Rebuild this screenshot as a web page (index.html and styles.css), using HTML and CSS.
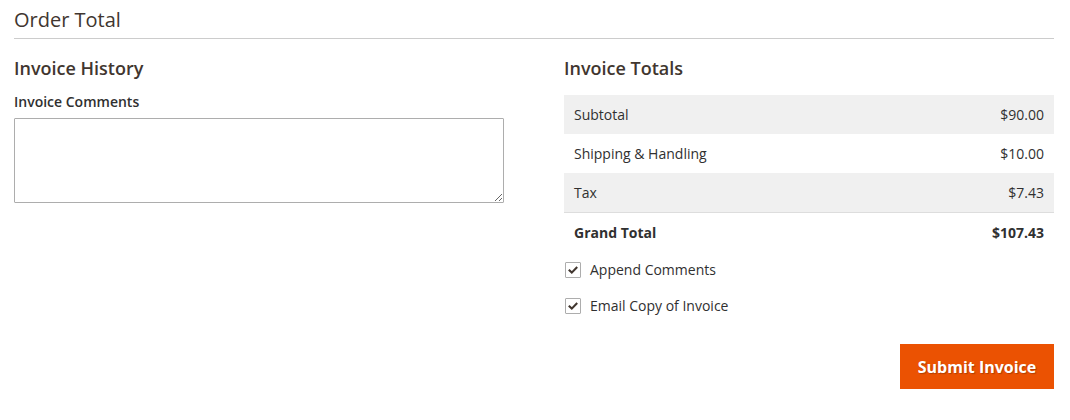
FILE: index.html
```html
<!DOCTYPE html>
<html>
<head>
<meta charset="utf-8">
<link rel="stylesheet" href="styles.css">
</head>
<body>
<section class="page">
  <h2 class="section-title">Order Total</h2>
  <div class="columns">
    <div class="col">
      <h3 class="item-title">Invoice History</h3>
      <label class="field-label" for="c">Invoice Comments</label>
      <textarea id="c" class="comments"></textarea>
    </div>
    <div class="col">
      <h3 class="item-title">Invoice Totals</h3>
      <table class="totals">
        <tr class="shade"><td>Subtotal</td><td class="amt">$90.00</td></tr>
        <tr><td>Shipping &amp; Handling</td><td class="amt">$10.00</td></tr>
        <tr class="shade"><td>Tax</td><td class="amt">$7.43</td></tr>
        <tr class="grand"><td>Grand Total</td><td class="amt">$107.43</td></tr>
      </table>
      <div class="checks">
        <label class="check"><span class="box"><svg viewBox="0 0 16 16" width="16" height="16"><path d="M3.2 7.8 L6.6 11 L12.8 4.6" fill="none" stroke="#41362f" stroke-width="2.4"/></svg></span>Append Comments</label>
        <label class="check"><span class="box"><svg viewBox="0 0 16 16" width="16" height="16"><path d="M3.2 7.8 L6.6 11 L12.8 4.6" fill="none" stroke="#41362f" stroke-width="2.4"/></svg></span>Email Copy of Invoice</label>
      </div>
      <div class="actions">
        <button class="submit">Submit Invoice</button>
      </div>
    </div>
  </div>
</section>
</body>
</html>
```

FILE: styles.css
```css
* { box-sizing: border-box; }
body {
  margin: 0;
  font-family: "Open Sans", "Liberation Sans", sans-serif;
  color: #303030;
  background: #fff;
}
.page {
  padding: 0 16px 0 14px;
}
.section-title {
  margin: 0;
  padding: 8px 0 6px;
  font-size: 20px;
  font-weight: 400;
  color: #41362f;
  line-height: 24px;
  border-bottom: 1px solid #cccccc;
}
.columns {
  display: grid;
  grid-template-columns: 490px 490px;
  column-gap: 60px;
}
.item-title {
  margin: 16px 0 0;
  font-size: 18px;
  font-weight: 600;
  color: #41362f;
  line-height: 26px;
}
.field-label {
  display: block;
  margin-top: 12px;
  font-size: 14px;
  font-weight: 600;
  color: #303030;
  line-height: 18px;
}
.comments {
  display: block;
  margin-top: 7px;
  width: 490px;
  height: 85px;
  border: 1px solid #adadad;
  border-radius: 1px;
  resize: vertical;
  font-family: inherit;
}
.totals {
  margin-top: 14px;
  width: 100%;
  border-collapse: collapse;
  font-size: 14px;
}
.totals td {
  height: 39px;
  padding: 0 10px;
  vertical-align: middle;
}
.totals .amt { text-align: right; }
.totals .shade td { background: #f0f0f0; }
.totals .grand td {
  border-top: 1px solid #dddddd;
  font-weight: 700;
  height: 40px;
}
.checks {
  display: flex;
  flex-direction: column;
  gap: 20px;
  margin-top: 10px;
}
.check {
  display: flex;
  align-items: center;
  font-size: 14px;
  line-height: 16px;
  color: #303030;
}
.box {
  display: inline-flex;
  width: 16px;
  height: 16px;
  border: 1px solid #adadad;
  border-radius: 1px;
  margin-right: 9px;
  margin-left: 1px;
  align-items: center;
  justify-content: center;
  background: #fff;
}
.box svg { display: block; width: 14px; height: 14px; }
.actions {
  display: flex;
  justify-content: flex-end;
  margin-top: 30px;
}
.submit {
  background: #eb5202;
  border: 1px solid #eb5202;
  color: #fff;
  font-family: inherit;
  font-size: 16px;
  font-weight: 700;
  height: 45px;
  padding: 0;
  width: 154px;
  border-radius: 0;
  text-shadow: 1px 1px 1px rgba(0,0,0,0.25);
}
```
